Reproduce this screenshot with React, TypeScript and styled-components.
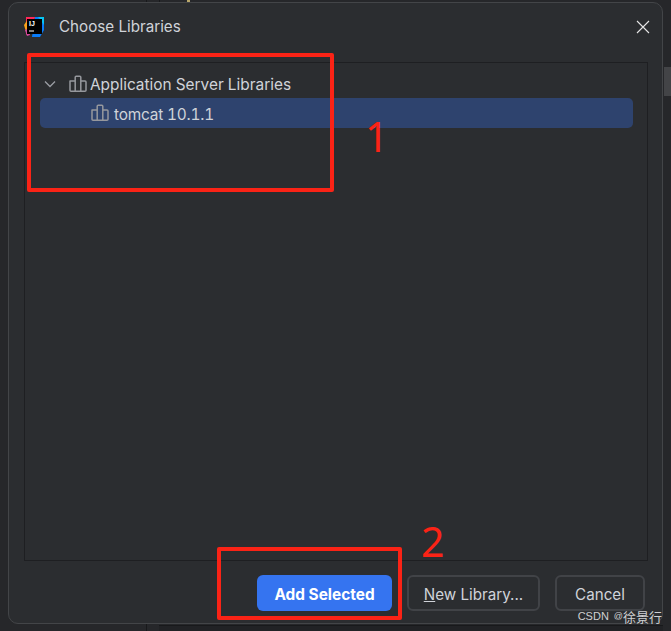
import { createGlobalStyle, styled } from "styled-components";

const GlobalStyle = createGlobalStyle`
  html, body {
    margin: 0;
    padding: 0;
    background: #26272a;
  }
`;

const Screen = styled.div`
  position: relative;
  width: 671px;
  height: 631px;
  box-sizing: border-box;
  padding: 2px 8px 7px 8px;
  overflow: hidden;
  background: #26272a;
  font-family: Inter, "Liberation Sans", sans-serif;
`;

// the IDE window that shows around the dialog
const ScrollThumb = styled.div`
  position: absolute;
  right: 0;
  top: 67px;
  width: 7px;
  height: 29px;
  background: #434447;
`;

const BackLine = styled.div<{ $x: number; $top?: boolean }>`
  position: absolute;
  left: ${(p) => p.$x}px;
  top: ${(p) => (p.$top ? "0" : "624px")};
  width: 1px;
  height: ${(p) => (p.$top ? "2px" : "7px")};
  background: #18191b;
`;

const BackTab = styled.div`
  position: absolute;
  left: 159px;
  right: 8px;
  top: 625px;
  height: 6px;
  border-top: 1px solid #18191b;
  background: #212225;
`;

const Caret = styled.div`
  position: absolute;
  left: 187px;
  top: 0;
  width: 3px;
  height: 3px;
  background: #b9a76a;
`;

const Dialog = styled.div`
  position: relative;
  display: flex;
  flex-direction: column;
  height: 100%;
  box-sizing: border-box;
  background: #2b2d30;
  border: 1px solid #434548;
  border-radius: 10px;
`;

const Header = styled.header`
  display: flex;
  align-items: center;
  height: 47px;
  padding: 0 12px 0 14px;
  gap: 14px;
  flex-shrink: 0;
`;

const Title = styled.h1`
  flex: 1;
  margin: 0;
  font-size: 15.2px;
  font-weight: 400;
  color: #d0d3d9;
`;

const CloseButton = styled.button`
  display: flex;
  padding: 0;
  border: 0;
  background: none;
`;

const TreePanel = styled.div`
  flex: 1;
  margin: 12px 14px 0 15px;
  padding: 7px 14px 0 15px;
  border: 1px solid #1e1f22;
`;

const TreeRow = styled.div<{ $selected?: boolean; $indent: number }>`
  display: flex;
  align-items: center;
  height: ${(p) => (p.$selected ? 30 : 28)}px;
  padding-left: ${(p) => p.$indent}px;
  border-radius: 5px;
  background: ${(p) => (p.$selected ? "#2e436e" : "transparent")};
  color: #d0d3d9;
  font-size: 15.4px;
  font-variant-numeric: tabular-nums;
`;

const RowLabel = styled.span<{ $selected?: boolean }>`
  padding-top: ${(p) => (p.$selected ? 2 : 0)}px;
  letter-spacing: ${(p) => (p.$selected ? "-0.2px" : "0")};
`;

const Chevron = styled.svg`
  width: 12px;
  height: 12px;
  margin-right: 13px;
`;

const LibIcon = styled.svg<{ $gap: number }>`
  width: 18px;
  height: 18px;
  margin-right: ${(p) => p.$gap}px;
`;

const Footer = styled.footer`
  display: flex;
  justify-content: flex-end;
  gap: 15px;
  height: 62px;
  padding: 14px 17px 0 0;
  box-sizing: border-box;
  flex-shrink: 0;
`;

const Button = styled.button<{ $primary?: boolean; $width: number }>`
  width: ${(p) => p.$width}px;
  height: 36px;
  padding: 2px 0 0;
  box-sizing: border-box;
  border-radius: 6px;
  border: ${(p) => (p.$primary ? "0" : "2px solid #414347")};
  background: ${(p) => (p.$primary ? "#3574f0" : "transparent")};
  color: ${(p) => (p.$primary ? "#ffffff" : "#d0d3d9")};
  font-family: inherit;
  font-size: ${(p) => (p.$primary ? 15.4 : 15.2)}px;
  font-weight: ${(p) => (p.$primary ? 700 : 400)};
`;

const Underlined = styled.span`
  text-decoration: underline;
`;

const RedBox = styled.div<{ $x: number; $y: number; $w: number; $h: number }>`
  position: absolute;
  left: ${(p) => p.$x}px;
  top: ${(p) => p.$y}px;
  width: ${(p) => p.$w}px;
  height: ${(p) => p.$h}px;
  box-sizing: border-box;
  border: 4px solid #fb2316;
  border-radius: 2px;
`;

const RedNumber = styled.span<{ $x: number; $y: number }>`
  position: absolute;
  left: ${(p) => p.$x}px;
  top: ${(p) => p.$y}px;
  font-family: "Noto Sans", sans-serif;
  font-size: 41px;
  line-height: 1;
  color: #fb2316;
`;

const Watermark = styled.span`
  position: absolute;
  right: 9px;
  bottom: 7px;
  display: flex;
  align-items: center;
  font-family: "Noto Sans CJK SC", sans-serif;
  font-size: 13px;
  line-height: 15px;
  color: #cfd0d2;
`;

const WatermarkLatin = styled.span<{ $size: number; $gap: number }>`
  margin-right: ${(p) => p.$gap}px;
  font-family: "Liberation Sans", sans-serif;
  font-size: ${(p) => p.$size}px;
`;

function LibraryIcon({ gap }: { gap: number }) {
  return (
    <LibIcon $gap={gap} viewBox="0 0 18 18" fill="none" stroke="#96989d" strokeWidth="1.5">
      <path
        d="M1 6h5.2v10.3H2a1 1 0 0 1-1-1zM6.2 2.2a1 1 0 0 1 1-1h3.6a1 1 0 0 1 1 1v14.1H6.2zM11.8 6H16a1 1 0 0 1 1 1v8.3a1 1 0 0 1-1 1h-4.2z"
        strokeLinejoin="round"
      />
    </LibIcon>
  );
}

function Logo() {
  return (
    <svg width="22" height="22" viewBox="0 0 22 22">
      <path d="M3 1h9l-2 10-7 8z" fill="#fe2857" />
      <path d="M1 9l4-6 3 13-4 3z" fill="#f9a11b" />
      <path d="M2 14l4-2 1 7-3 1z" fill="#d3479f" />
      <path d="M12 1h9v13l-4 7H9z" fill="#087cfa" />
      <path d="M15 1h6v8z" fill="#07c3f2" />
      <rect x="4" y="3" width="15" height="15" fill="#000" />
      <text x="6" y="10" fontFamily="Liberation Sans" fontSize="7" fontWeight="700" fill="#fff">
        IJ
      </text>
      <rect x="6" y="14.5" width="5" height="1" fill="#fff" />
    </svg>
  );
}

export default function App() {
  return (
    <Screen>
      <GlobalStyle />
      <BackLine $top $x={146} />
      <BackLine $top $x={159} />
      <Caret />
      <BackLine $x={146} />
      <BackTab />
      <ScrollThumb />
      <Dialog>
        <Header>
          <Logo />
          <Title>Choose Libraries</Title>
          <CloseButton aria-label="Close">
            <svg width="14" height="14" viewBox="0 0 14 14" stroke="#e6e6e6" strokeWidth="1.1">
              <path d="M1 1l12 12M13 1L1 13" />
            </svg>
          </CloseButton>
        </Header>
        <TreePanel>
          <TreeRow $indent={4}>
            <Chevron viewBox="0 0 12 12" fill="none" stroke="#9a9da3" strokeWidth="1.3">
              <path d="M1 3.5l5 5 5-5" />
            </Chevron>
            <LibraryIcon gap={3} />
            <RowLabel>Application Server Libraries</RowLabel>
          </TreeRow>
          <TreeRow $selected $indent={51}>
            <LibraryIcon gap={5} />
            <RowLabel $selected>tomcat 10.1.1</RowLabel>
          </TreeRow>
        </TreePanel>
        <Footer>
          <Button $primary $width={135}>Add Selected</Button>
          <Button $width={133}><Underlined>N</Underlined>ew Library...</Button>
          <Button $width={90}>Cancel</Button>
        </Footer>
      </Dialog>
      <RedBox $x={27} $y={53} $w={307} $h={139} />
      <RedBox $x={217} $y={547} $w={185} $h={73} />
      <RedNumber $x={365} $y={116}>1</RedNumber>
      <RedNumber $x={421} $y={521}>2</RedNumber>
      <Watermark>
        <WatermarkLatin $size={11} $gap={5}>CSDN</WatermarkLatin>
        <WatermarkLatin $size={9} $gap={0}>@</WatermarkLatin>
        徐景行
      </Watermark>
    </Screen>
  );
}
